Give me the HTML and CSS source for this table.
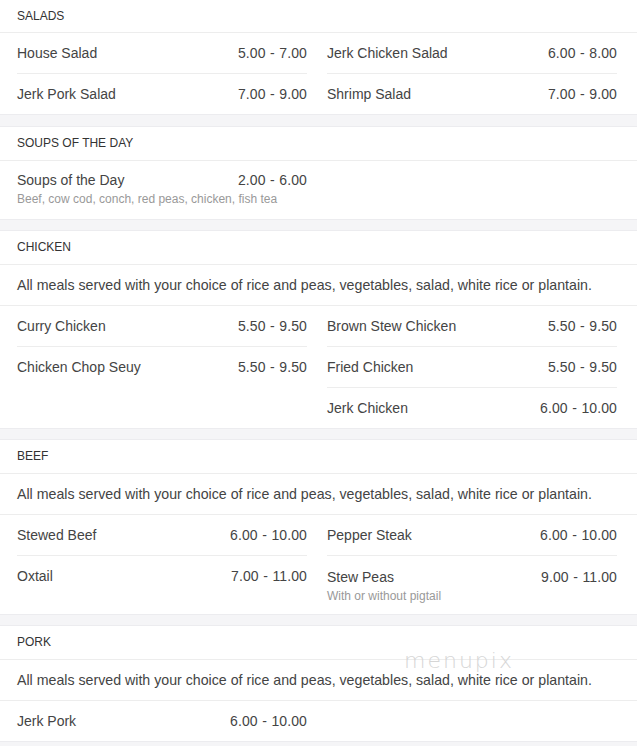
FILE: index.html
```html
<!DOCTYPE html>
<html>
<head>
<meta charset="utf-8">
<link rel="stylesheet" href="styles.css">
</head>
<body>
<div class="menu">
  <section class="sec first">
    <div class="head">SALADS</div>
    <div class="cols">
      <div class="col">
        <div class="item"><div class="line"><span>House Salad</span><span>5.00 - 7.00</span></div></div>
        <div class="item"><div class="line"><span>Jerk Pork Salad</span><span>7.00 - 9.00</span></div></div>
      </div>
      <div class="col">
        <div class="item"><div class="line"><span>Jerk Chicken Salad</span><span>6.00 - 8.00</span></div></div>
        <div class="item"><div class="line"><span>Shrimp Salad</span><span>7.00 - 9.00</span></div></div>
      </div>
    </div>
  </section>

  <section class="sec">
    <div class="head">SOUPS OF THE DAY</div>
    <div class="cols">
      <div class="col">
        <div class="item desc-item soup"><div class="line"><span>Soups of the Day</span><span>2.00 - 6.00</span></div><div class="desc">Beef, cow cod, conch, red peas, chicken, fish tea</div></div>
      </div>
      <div class="col"></div>
    </div>
  </section>

  <section class="sec">
    <div class="head">CHICKEN</div>
    <div class="note">All meals served with your choice of rice and peas, vegetables, salad, white rice or plantain.</div>
    <div class="cols">
      <div class="col">
        <div class="item"><div class="line"><span>Curry Chicken</span><span>5.50 - 9.50</span></div></div>
        <div class="item"><div class="line"><span>Chicken Chop Seuy</span><span>5.50 - 9.50</span></div></div>
      </div>
      <div class="col">
        <div class="item"><div class="line"><span>Brown Stew Chicken</span><span>5.50 - 9.50</span></div></div>
        <div class="item"><div class="line"><span>Fried Chicken</span><span>5.50 - 9.50</span></div></div>
        <div class="item"><div class="line"><span>Jerk Chicken</span><span>6.00 - 10.00</span></div></div>
      </div>
    </div>
  </section>

  <section class="sec">
    <div class="head">BEEF</div>
    <div class="note">All meals served with your choice of rice and peas, vegetables, salad, white rice or plantain.</div>
    <div class="cols">
      <div class="col">
        <div class="item"><div class="line"><span>Stewed Beef</span><span>6.00 - 10.00</span></div></div>
        <div class="item"><div class="line"><span>Oxtail</span><span>7.00 - 11.00</span></div></div>
      </div>
      <div class="col">
        <div class="item"><div class="line"><span>Pepper Steak</span><span>6.00 - 10.00</span></div></div>
        <div class="item desc-item"><div class="line"><span>Stew Peas</span><span>9.00 - 11.00</span></div><div class="desc">With or without pigtail</div></div>
      </div>
    </div>
  </section>

  <section class="sec">
    <div class="head">PORK</div>
    <div class="note">All meals served with your choice of rice and peas, vegetables, salad, white rice or plantain.</div>
    <div class="cols">
      <div class="col">
        <div class="item"><div class="line"><span>Jerk Pork</span><span>6.00 - 10.00</span></div></div>
      </div>
      <div class="col"></div>
    </div>
  </section>
</div>
<div class="watermark">menupix</div>
</body>
</html>
```
FILE: styles.css
```css
html, body {
  margin: 0;
  padding: 0;
}
body {
  background: #f5f5f7;
  font-family: "Liberation Sans", Arial, sans-serif;
  color: #444;
  position: relative;
}
.sec {
  background: #fff;
  border-top: 1px solid #ececef;
  border-bottom: 1px solid #ececef;
  margin-bottom: 10px;
}
.sec.first {
  border-top: none;
  margin-bottom: 11px;
}
.head {
  font-size: 12px;
  line-height: 32px;
  height: 33px;
  padding: 0 17px;
  color: #333;
  border-bottom: 1px solid #ededed;
}
.sec.first .head {
  height: 32px;
}
.sec + .sec .head {
  line-height: 33px;
}
.note {
  font-size: 14.2px;
  line-height: 40px;
  height: 40px;
  padding: 0 17px;
  color: #444;
  border-bottom: 1px solid #ededed;
}
.cols {
  display: flex;
  gap: 20px;
  padding: 0 20px 0 17px;
}
.col {
  width: 290px;
  display: flex;
  flex-direction: column;
}
.item {
  height: 40px;
  display: flex;
  flex-direction: column;
  justify-content: center;
  border-bottom: 1px solid #ededed;
}
.item:last-child {
  border-bottom: none;
}
.item.desc-item {
  height: auto;
  padding: 11px 0 9px;
  justify-content: flex-start;
}
.item.desc-item.soup {
  padding: 9px 0 11px;
}
.line {
  display: flex;
  justify-content: space-between;
  font-size: 14px;
  line-height: 20px;
  color: #444;
}
.line span + span {
  word-spacing: 0.5px;
  letter-spacing: 0.1px;
}
.desc {
  font-size: 12px;
  line-height: 18px;
  color: #999;
}
.watermark {
  position: absolute;
  left: 404px;
  top: 652px;
  font-family: "DejaVu Sans", sans-serif;
  font-weight: 200;
  font-size: 22px;
  letter-spacing: 2px;
  color: #d6d6d6;
  line-height: 18px;
}
```
